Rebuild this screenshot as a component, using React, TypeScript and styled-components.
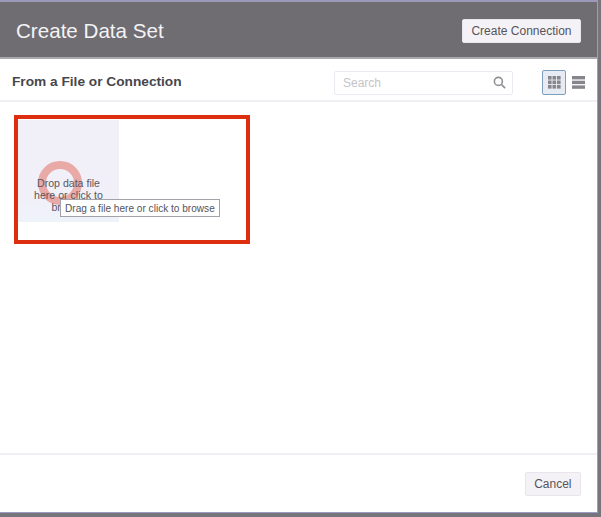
import React from "react";
import styled, { createGlobalStyle } from "styled-components";

const GlobalStyle = createGlobalStyle`
  html, body {
    margin: 0;
    padding: 0;
    height: 517px;
    overflow: hidden;
    background: #77757b;
    font-family: "Liberation Sans", Arial, sans-serif;
  }
`;

const Dialog = styled.div`
  box-sizing: border-box;
  width: 598px;
  height: 513px;
  display: flex;
  flex-direction: column;
  background: #fff;
  border-top: 2px solid #9a99b8;
  border-right: 1px solid #9a9cc4;
  border-bottom: 1px solid #9a9cc4;
`;

const Header = styled.header`
  box-sizing: border-box;
  height: 57px;
  flex: none;
  display: flex;
  align-items: center;
  justify-content: space-between;
  padding: 2px 16px 0;
  background: #6f6d72;
  border-bottom: 2px solid #a9a8ae;
`;

const Title = styled.h1`
  margin: 0;
  font-size: 20.6px;
  font-weight: 400;
  color: #f4f3f5;
`;

const Button = styled.button`
  box-sizing: border-box;
  border: 1px solid #e8e6ec;
  border-radius: 2px;
  background: #f4f2f7;
  color: #55545a;
  font-family: inherit;
  font-size: 12px;
  height: 24px;
  padding: 0 8.5px;
`;

const Toolbar = styled.div`
  box-sizing: border-box;
  height: 43px;
  flex: none;
  display: flex;
  align-items: center;
  padding: 2px 7px 0 12px;
  border-bottom: 2px solid #f0eff3;
`;

const Heading = styled.h2`
  margin: 1px auto 0 0;
  font-size: 13.7px;
  font-weight: 700;
  color: #47464c;
`;

const SearchBox = styled.div`
  box-sizing: border-box;
  width: 179px;
  height: 24px;
  display: flex;
  align-items: center;
  justify-content: space-between;
  padding: 0 6px 0 8px;
  margin: 4px 29px 0 0;
  border: 1px solid #ece9f1;
  border-radius: 2px;
  font-size: 12px;
  color: #c5c4ca;
`;

const ViewButton = styled.div<{ $active?: boolean }>`
  box-sizing: border-box;
  width: 24px;
  height: 25px;
  margin-top: 3px;
  display: flex;
  align-items: center;
  justify-content: center;
  border-radius: 2px;
  border: 1px solid ${(p) => (p.$active ? "#7f9dbd" : "transparent")};
  background: ${(p) => (p.$active ? "#e7ecf4" : "transparent")};
`;

const Content = styled.main`
  position: relative;
  flex: 1;
  padding: 18px 0 0 18px;
  border-bottom: 2px solid #f0eff3;
`;

const DropZone = styled.div`
  position: relative;
  box-sizing: border-box;
  width: 101px;
  height: 102px;
  padding: 57px 14px 0;
  background: linear-gradient(#f1f0f9, #f1f0f9 80%, #eef3fa);
  text-align: center;
  font-size: 10.6px;
  line-height: 12px;
  color: #59575e;
`;

const DropText = styled.span`
  position: relative;
  display: block;
`;

const Ring = styled.div`
  position: absolute;
  left: 20px;
  top: 41px;
  width: 44px;
  height: 44px;
  box-sizing: border-box;
  border: 8px solid #e9a9a6;
  border-radius: 50%;
`;

const Tooltip = styled.div`
  position: absolute;
  left: 60px;
  top: 97px;
  box-sizing: border-box;
  height: 18px;
  padding: 0 4px;
  display: flex;
  align-items: center;
  white-space: nowrap;
  background: #fff;
  border: 1px solid #a3a2a8;
  font-size: 10.1px;
  color: #55545a;
`;

const Highlight = styled.div`
  position: absolute;
  left: 14px;
  top: 13px;
  width: 236px;
  height: 129px;
  box-sizing: border-box;
  border: 4px solid #dd2e0f;
  pointer-events: none;
`;

const Footer = styled.footer`
  box-sizing: border-box;
  height: 57px;
  flex: none;
  display: flex;
  align-items: center;
  justify-content: flex-end;
  padding: 0 16px 0 0;
`;

const SearchIcon = () => (
  <svg width="13" height="13" viewBox="0 0 14 14" fill="none" stroke="#908f95" strokeWidth="1.7">
    <circle cx="5.8" cy="5.8" r="4.3" />
    <path d="M9 9l4 4" />
  </svg>
);

const GridIcon = () => (
  <svg width="13" height="13" viewBox="0 0 13 13" fill="#87868c">
    {[0, 4.5, 9].map((y) =>
      [0, 4.5, 9].map((x) => <rect key={`${x}-${y}`} x={x} y={y} width="3.6" height="3.6" />)
    )}
  </svg>
);

const ListIcon = () => (
  <svg width="13" height="13" viewBox="0 0 13 13" fill="#87868c">
    <rect x="0" y="0" width="13" height="3.4" />
    <rect x="0" y="4.7" width="13" height="3.4" />
    <rect x="0" y="9.4" width="13" height="3.4" />
  </svg>
);

export default function App() {
  return (
    <>
      <GlobalStyle />
      <Dialog>
        <Header>
          <Title>Create Data Set</Title>
          <Button>Create Connection</Button>
        </Header>
        <Toolbar>
          <Heading>From a File or Connection</Heading>
          <SearchBox>
            Search
            <SearchIcon />
          </SearchBox>
          <ViewButton $active>
            <GridIcon />
          </ViewButton>
          <ViewButton>
            <ListIcon />
          </ViewButton>
        </Toolbar>
        <Content>
          <DropZone>
            <Ring />
            <DropText>Drop data file here or click to browse</DropText>
          </DropZone>
          <Tooltip>Drag a file here or click to browse</Tooltip>
          <Highlight />
        </Content>
        <Footer>
          <Button>Cancel</Button>
        </Footer>
      </Dialog>
    </>
  );
}
